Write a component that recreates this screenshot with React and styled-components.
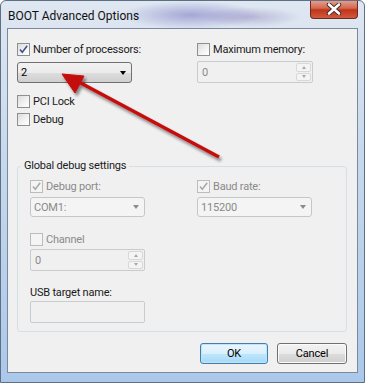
import styled, { createGlobalStyle } from "styled-components";

const Global = createGlobalStyle`
  html, body { margin: 0; padding: 0; background: #ffffff; }
  body {
    font-family: Roboto, "Liberation Sans", sans-serif;
    font-size: 11px;
    letter-spacing: -0.2px;
  }
`;

const Window = styled.div`
  position: relative;
  width: 365px;
  height: 383px;
  box-sizing: border-box;
  padding: 0 6px 9px 6px;
  display: flex;
  flex-direction: column;
  overflow: hidden;
  border: 1px solid #5d6f85;
  border-radius: 6px 6px 0 0;
  background:
    radial-gradient(ellipse 70px 14px at 190px 14px, rgba(95, 90, 180, 0.45), transparent),
    radial-gradient(ellipse 50px 10px at 250px 16px, rgba(120, 100, 170, 0.35), transparent),
    linear-gradient(to bottom, #dfe7f1 0%, #c8d9ec 40%, #abc8ea 100%);
`;

const TitleBar = styled.div`
  flex: none;
  height: 27px;
  display: flex;
  align-items: flex-start;
  justify-content: space-between;
`;

const Title = styled.span`
  font-size: 12px;
  letter-spacing: 0;
  color: #101010;
  margin-top: 8px;
  padding-left: 1px;
`;

const CloseButton = styled.div`
  width: 46px;
  height: 18px;
  margin-top: -1px;
  border: 1px solid #6b2a22;
  border-top: none;
  border-radius: 0 0 4px 4px;
  display: flex;
  align-items: center;
  justify-content: center;
  background: linear-gradient(to bottom, #e8a493 0%, #d2694f 45%, #c0341b 55%, #d25a3c 100%);
`;

const Client = styled.div`
  flex: 1;
  min-height: 0;
  border: 1px solid #7a8a9c;
  background: #f0f0f0;
  padding: 14px 10px 8px 9px;
  display: flex;
  flex-direction: column;
`;

const TopGrid = styled.div`
  display: grid;
  grid-template-columns: 180px auto;
`;

const Column = styled.div`
  display: flex;
  flex-direction: column;
  align-items: flex-start;
`;

const CheckRow = styled.label`
  display: flex;
  align-items: center;
  gap: 3px;
  height: 13px;
  margin-top: ${(p) => p.$mt || 0}px;
  color: ${(p) => (p.$disabled ? "#8a8a8a" : "#1a1a1a")};
  white-space: nowrap;
`;

const Box = styled.span`
  width: 11px;
  height: 11px;
  border: 1px solid ${(p) => (p.$disabled ? "#bcbcbc" : "#8e8f8f")};
  background: ${(p) =>
    p.$disabled
      ? "#f4f4f4"
      : "linear-gradient(135deg, #dcdcdc 0%, #f4f4f4 60%, #ffffff 100%)"};
  display: flex;
  align-items: center;
  justify-content: center;
  flex: none;
`;

const Combo = styled.div`
  box-sizing: border-box;
  width: 115px;
  height: ${(p) => p.$h || 21}px;
  margin-top: ${(p) => p.$mt || 0}px;
  border: 1px solid ${(p) => (p.$disabled ? "#c4c7ca" : "#707070")};
  border-radius: 3px;
  padding: 0 5px 0 3px;
  display: flex;
  align-items: center;
  justify-content: space-between;
  color: ${(p) => (p.$disabled ? "#8a8a8a" : "#000")};
  background: ${(p) =>
    p.$disabled
      ? "#f4f4f4"
      : "linear-gradient(to bottom, #f2f2f2 0%, #ebebeb 50%, #dddddd 51%, #cfcfcf 100%)"};
`;

const Arrow = styled.span`
  width: 0;
  height: 0;
  border-left: 3.5px solid transparent;
  border-right: 3.5px solid transparent;
  border-top: 4px solid ${(p) => (p.$disabled ? "#8a8a8a" : "#000")};
`;

const Spinner = styled.div`
  box-sizing: border-box;
  width: ${(p) => p.$w || 116}px;
  height: ${(p) => p.$h || 21}px;
  margin-top: ${(p) => p.$mt || 0}px;
  border: 1px solid #c9cccf;
  border-radius: 2px;
  background: #f0f0f0;
  display: flex;
  color: #8a8a8a;
`;

const SpinValue = styled.span`
  flex: 1;
  padding-left: 4px;
  display: flex;
  align-items: center;
`;

const SpinButtons = styled.div`
  width: 15px;
  display: flex;
  flex-direction: column;
  padding: 1px;
  gap: 1px;
`;

const SpinButton = styled.div`
  flex: 1;
  border: 1px solid #d8d8d8;
  border-radius: 2px;
  background: #f4f4f4;
  display: flex;
  align-items: center;
  justify-content: center;
  &::after {
    content: "";
    border-left: 2.5px solid transparent;
    border-right: 2.5px solid transparent;
    ${(p) => (p.$up ? "border-bottom" : "border-top")}: 3px solid #a8a8a8;
  }
`;

const Group = styled.fieldset`
  margin: 33px 0 0 0;
  border: 1px solid #d5dfe5;
  border-radius: 3px;
  padding: 7px 12px 8px 12px;
`;

const Legend = styled.legend`
  margin-left: -9px;
  padding: 0 3px;
  line-height: 14px;
  color: #1a1a1a;
`;

const GroupGrid = styled.div`
  display: grid;
  grid-template-columns: 167px auto;
`;

const FieldLabel = styled.div`
  margin-top: 15px;
  line-height: 13px;
  color: #1a1a1a;
`;

const TextBox = styled.div`
  box-sizing: border-box;
  width: 115px;
  height: 22px;
  margin-top: 2px;
  border: 1px solid #c9cccf;
  border-radius: 2px;
  background: #f0f0f0;
`;

const ButtonRow = styled.div`
  display: flex;
  justify-content: flex-end;
  gap: 9px;
  margin-top: 11px;
`;

const Button = styled.div`
  box-sizing: border-box;
  width: ${(p) => p.$w}px;
  height: 21px;
  border: 1px solid ${(p) => (p.$default ? "#3c7fb1" : "#707070")};
  border-radius: 3px;
  display: flex;
  align-items: center;
  justify-content: center;
  color: #000;
  box-shadow: ${(p) => (p.$default ? "inset 0 0 0 1px #c2e4f6" : "inset 0 0 0 1px #fbfbfb")};
  background: ${(p) =>
    p.$default
      ? "linear-gradient(to bottom, #eaf6fd 0%, #d9f0fc 50%, #bee6fd 51%, #a7d9f5 100%)"
      : "linear-gradient(to bottom, #f2f2f2 0%, #ebebeb 50%, #dddddd 51%, #cfcfcf 100%)"};
`;

const Overlay = styled.svg`
  position: absolute;
  left: 0;
  top: 0;
  pointer-events: none;
`;

function Check({ disabled }) {
  return (
    <svg width="11" height="11" viewBox="0 0 11 11">
      <path
        d="M2 5.5 L4.3 8.3 L9.2 1.8"
        fill="none"
        stroke={disabled ? "#a8a8a8" : "#3c4f8e"}
        strokeWidth="1.5"
      />
    </svg>
  );
}

function CheckBox({ label, checked, disabled, mt }) {
  return (
    <CheckRow $disabled={disabled} $mt={mt}>
      <Box $disabled={disabled}>{checked && <Check disabled={disabled} />}</Box>
      {label}
    </CheckRow>
  );
}

function SpinBox({ value, mt, w, h }) {
  return (
    <Spinner $mt={mt} $w={w} $h={h}>
      <SpinValue>{value}</SpinValue>
      <SpinButtons>
        <SpinButton $up />
        <SpinButton />
      </SpinButtons>
    </Spinner>
  );
}

export default function App() {
  return (
    <>
      <Global />
      <Window>
        <TitleBar>
          <Title>BOOT Advanced Options</Title>
          <CloseButton>
            <svg width="16" height="12" viewBox="0 0 16 12">
              <path
                d="M3 1.5 L13 10.5 M13 1.5 L3 10.5"
                stroke="#3a2a28"
                strokeWidth="4.4"
                strokeLinecap="round"
              />
              <path
                d="M3 1.5 L13 10.5 M13 1.5 L3 10.5"
                stroke="#ffffff"
                strokeWidth="2.6"
                strokeLinecap="round"
              />
            </svg>
          </CloseButton>
        </TitleBar>
        <Client>
          <TopGrid>
            <Column>
              <CheckBox label="Number of processors:" checked />
              <Combo $mt={6}>
                <span>2</span>
                <Arrow />
              </Combo>
              <CheckBox label="PCI Lock" mt={12} />
              <CheckBox label="Debug" mt={5} />
            </Column>
            <Column>
              <CheckBox label="Maximum memory:" />
              <SpinBox value="0" mt={5} h={22} />
            </Column>
          </TopGrid>
          <Group>
            <Legend>Global debug settings</Legend>
            <GroupGrid>
              <Column>
                <CheckBox label="Debug port:" checked disabled />
                <Combo $disabled $h={20} $mt={4}>
                  <span>COM1:</span>
                  <Arrow $disabled />
                </Combo>
                <CheckBox label="Channel" disabled mt={16} />
                <SpinBox value="0" mt={3} w={115} h={22} />
                <FieldLabel>USB target name:</FieldLabel>
                <TextBox />
              </Column>
              <Column>
                <CheckBox label="Baud rate:" checked disabled />
                <Combo $disabled $h={20} $mt={4}>
                  <span>115200</span>
                  <Arrow $disabled />
                </Combo>
              </Column>
            </GroupGrid>
          </Group>
          <ButtonRow>
            <Button $w={68} $default>OK</Button>
            <Button $w={70}>Cancel</Button>
          </ButtonRow>
        </Client>
        <Overlay width="365" height="383" viewBox="0 0 365 383">
          <defs>
            <filter id="shadow" x="-20%" y="-20%" width="140%" height="140%">
              <feDropShadow dx="2" dy="3" stdDeviation="1.6" floodColor="#000" floodOpacity="0.45" />
            </filter>
          </defs>
          <g filter="url(#shadow)" fill="#c40d0d" stroke="#c40d0d">
            <line x1="218" y1="156" x2="76" y2="80" strokeWidth="3.5" />
            <polygon points="61,73 83,75 74,92" strokeWidth="1" strokeLinejoin="round" />
          </g>
        </Overlay>
      </Window>
    </>
  );
}
